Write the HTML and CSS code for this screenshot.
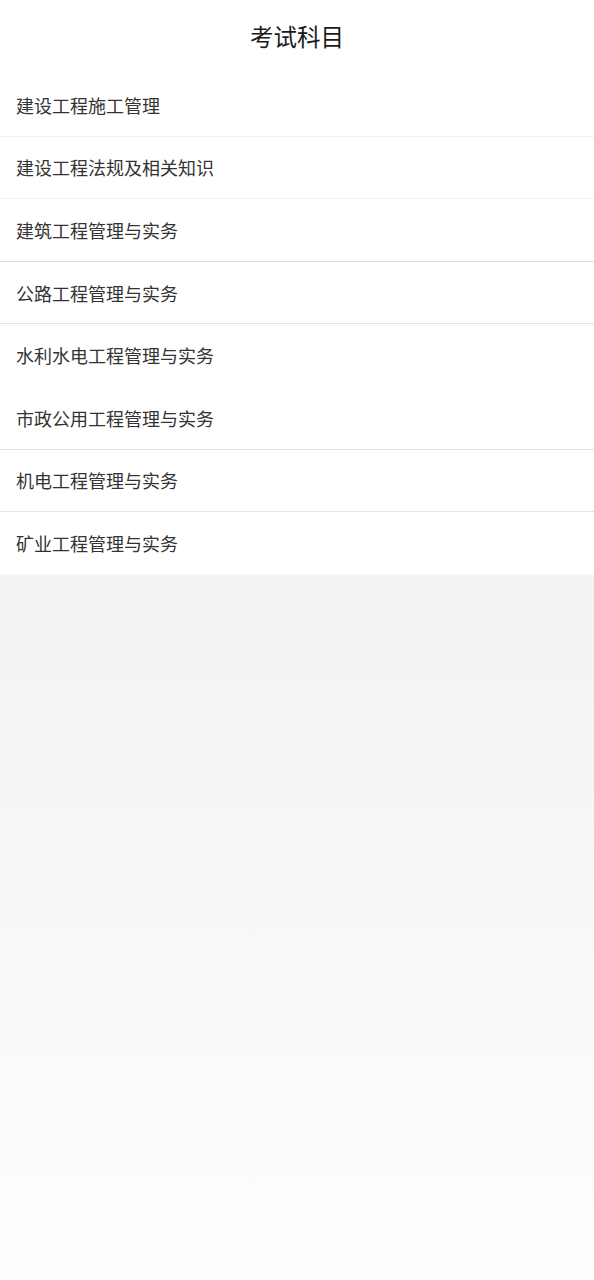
FILE: index.html
```html
<!DOCTYPE html>
<html>
<head>
<meta charset="UTF-8">
<meta name="viewport" content="width=device-width, initial-scale=1.0">
<title>考试科目</title>
<link rel="stylesheet" href="styles.css">
</head>
<body>
<div class='page'>
<div class='header'>考试科目</div>
<ul class='subject-list'>
    <li class='subject line-faint'>建设工程施工管理</li>
    <li class='subject line-faint'>建设工程法规及相关知识</li>
    <li class='subject line-dark'>建筑工程管理与实务</li>
    <li class='subject line-mid'>公路工程管理与实务</li>
    <li class='subject line-none'>水利水电工程管理与实务</li>
    <li class='subject line-mid'>市政公用工程管理与实务</li>
    <li class='subject line-mid'>机电工程管理与实务</li>
    <li class='subject line-none'>矿业工程管理与实务</li>
</ul>
<div class='rest'></div>
</div>
</body>
</html>
```

FILE: styles.css
```css
html, body {
    margin: 0;
    padding: 0;
}

body {
    font-family: "Noto Sans CJK SC", "Noto Sans", sans-serif;
    background-color: #fff;
}

.page {
    width: 594px;
    min-height: 1280px;
    display: flex;
    flex-direction: column;
}

.header {
    height: 74px;
    display: flex;
    align-items: center;
    justify-content: center;
    font-size: 23.5px;
    color: #1a1a1a;
    background-color: #fff;
    padding-bottom: 2px;
    box-sizing: border-box;
}

.subject-list {
    list-style: none;
    margin: 0;
    padding: 0;
    background-color: #fff;
}

.subject {
    box-sizing: border-box;
    height: 62.6px;
    padding: 0 16px;
    display: flex;
    align-items: center;
    font-size: 18px;
    color: #333;
    border-bottom: 1px solid #eee;
}

.line-faint { border-bottom-color: #f1f1f1; }
.line-dark { border-bottom-color: #dcdcdc; }
.line-mid { border-bottom-color: #e3e3e3; }
.line-none { border-bottom-color: #fbfbfb; }

.rest {
    flex: 1;
    background: linear-gradient(to bottom, #f2f2f2, #fefefe);
}
```
